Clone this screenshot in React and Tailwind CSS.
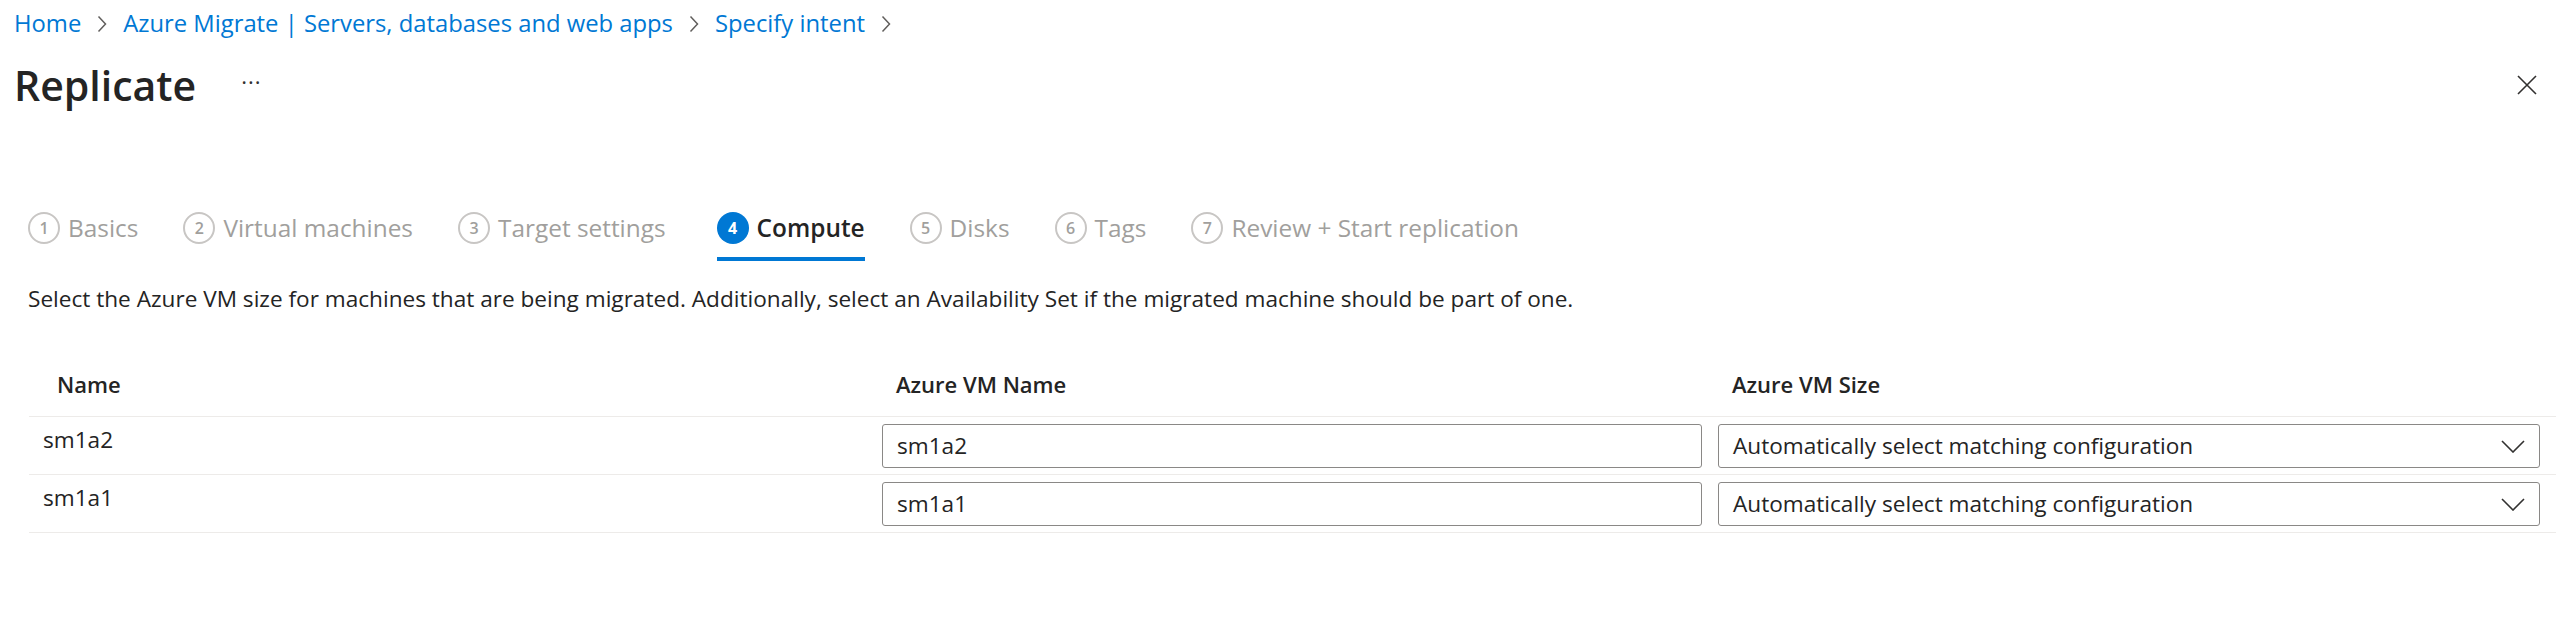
import React from "react";

const steps = [
    { n: 1, label: "Basics" },
    { n: 2, label: "Virtual machines" },
    { n: 3, label: "Target settings" },
    { n: 4, label: "Compute", active: true },
    { n: 5, label: "Disks" },
    { n: 6, label: "Tags" },
    { n: 7, label: "Review + Start replication" },
];

const rows = ["sm1a2", "sm1a1"];

const Chevron = () => (
    <svg width="10" height="18" viewBox="0 0 10 18" className="mx-[16px]">
        <path d="M1.5 1.5 L8.5 9 L1.5 16.5" fill="none" stroke="#605e5c" strokeWidth="1.5" />
    </svg>
);

const App = () => {
    return (
        <div className="w-[2560px] h-[618px] bg-white text-[#323130] font-['Open_Sans',sans-serif] overflow-hidden">
            {/* breadcrumb */}
            <div className="flex items-center pl-[14px] pt-[8px] h-[40px] text-[23.8px] text-[#0078d4]">
                <span>Home</span>
                <Chevron />
                <span>Azure Migrate | Servers, databases and web apps</span>
                <Chevron />
                <span>Specify intent</span>
                <Chevron />
            </div>

            {/* title */}
            <div className="flex items-center justify-between pl-[14px] pr-[23px] mt-[20px] h-[50px]">
                <div className="flex items-center">
                    <h1 className="text-[41px] font-semibold leading-none text-[#242424]">Replicate</h1>
                    <span className="ml-[45px] text-[22px] tracking-[1px] text-[#323130] -mt-[8px]">···</span>
                </div>
                <svg width="20" height="20" viewBox="0 0 20 20">
                    <path d="M1 1 L19 19 M19 1 L1 19" stroke="#323130" strokeWidth="1.6" />
                </svg>
            </div>

            {/* steps */}
            <div className="flex items-center gap-[45px] pl-[28px] mt-[96px] h-[44px]">
                {steps.map((s) => (
                    <div key={s.n} className={`relative flex items-center gap-[8px] h-full ${s.active ? "ml-[6px]" : ""}`}>
                        {s.active ? (
                            <span className="flex items-center justify-center size-[32px] rounded-full bg-[#0078d4] text-white text-[16px] font-bold">{s.n}</span>
                        ) : (
                            <span className="flex items-center justify-center size-[32px] rounded-full border-2 border-[#c8c6c4] text-[#a19f9d] text-[16px] font-semibold">{s.n}</span>
                        )}
                        <span className={`text-[24.4px] ${s.active ? "text-[#242424] font-semibold" : "text-[#a19f9d]"}`}>{s.label}</span>
                        {s.active && <span className="absolute left-0 right-0 -bottom-[11px] h-[4px] bg-[#0078d4]" />}
                    </div>
                ))}
            </div>

            {/* description */}
            <p className="pl-[28px] mt-[34px] text-[22.6px] leading-[30px] text-[#242424]">
                Select the Azure VM size for machines that are being migrated. Additionally, select an Availability Set if the migrated machine should be part of one.
            </p>

            {/* table */}
            <div className="ml-[29px] mr-[4px] mt-[39px]">
                <div className="grid grid-cols-[839px_836px_1fr] h-[64px] items-center border-b border-[#edebe9] text-[22px] font-semibold text-[#242424]">
                    <div className="pl-[28px]">Name</div>
                    <div className="pl-[28px]">Azure VM Name</div>
                    <div className="pl-[28px]">Azure VM Size</div>
                </div>
                {rows.map((r) => (
                    <div key={r} className="grid grid-cols-[839px_836px_1fr] h-[58px] border-b border-[#edebe9] text-[22.6px]">
                        <div className="pl-[14px] pt-[6px] text-[#242424]">{r}</div>
                        <div className="pl-[14px] pr-[2px] pt-[7px]">
                            <div className="flex items-center h-[44px] px-[14px] border-[1.5px] border-[#8a8886] rounded-[3px] text-[#242424]">{r}</div>
                        </div>
                        <div className="pl-[14px] pr-[16px] pt-[7px]">
                            <div className="flex items-center justify-between h-[44px] pl-[14px] pr-[14px] border-[1.5px] border-[#8a8886] rounded-[3px] text-[#242424]">
                                <span>Automatically select matching configuration</span>
                                <svg width="24" height="13" viewBox="0 0 24 13">
                                    <path d="M1 1 L12 12 L23 1" fill="none" stroke="#323130" strokeWidth="1.6" />
                                </svg>
                            </div>
                        </div>
                    </div>
                ))}
            </div>
        </div>
    );
};

export default App;
